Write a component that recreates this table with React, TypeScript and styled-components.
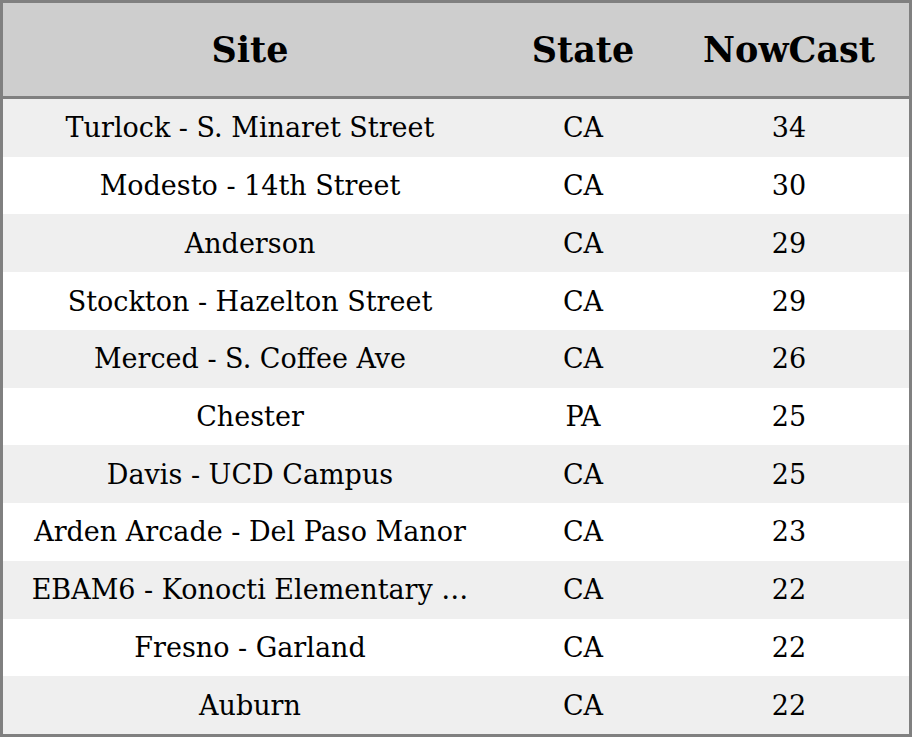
import React from "react";
import styled, { createGlobalStyle } from "styled-components";

const Global = createGlobalStyle`
  html, body { margin: 0; padding: 0; background: #ffffff; }
  body { font-family: "DejaVu Serif", serif; }
`;

const Table = styled.div`
  box-sizing: border-box;
  width: 912px;
  height: 737px;
  border: 3px solid #808080;
  display: grid;
  grid-template-columns: 494px 172px 1fr;
  grid-template-rows: 96px repeat(11, 1fr);
  font-family: "DejaVu Serif", serif;
  color: #000;
`;

const HeadCell = styled.div`
  background: #cecece;
  border-bottom: 3px solid #808080;
  display: flex;
  align-items: center;
  justify-content: center;
  font-weight: bold;
  font-size: 35px;
`;

const Cell = styled.div<{ $alt: boolean }>`
  background: ${(p) => (p.$alt ? "#efefef" : "#ffffff")};
  display: flex;
  align-items: center;
  justify-content: center;
  font-size: 27px;
  white-space: nowrap;
  overflow: hidden;
`;

const rows: [string, string, string][] = [
  ["Turlock - S. Minaret Street", "CA", "34"],
  ["Modesto - 14th Street", "CA", "30"],
  ["Anderson", "CA", "29"],
  ["Stockton - Hazelton Street", "CA", "29"],
  ["Merced - S. Coffee Ave", "CA", "26"],
  ["Chester", "PA", "25"],
  ["Davis - UCD Campus", "CA", "25"],
  ["Arden Arcade - Del Paso Manor", "CA", "23"],
  ["EBAM6 - Konocti Elementary \u2026", "CA", "22"],
  ["Fresno - Garland", "CA", "22"],
  ["Auburn", "CA", "22"],
];

export default function App() {
  return (
    <>
      <Global />
      <Table>
        <HeadCell>Site</HeadCell>
        <HeadCell>State</HeadCell>
        <HeadCell>NowCast</HeadCell>
        {rows.map((r, i) => (
          <React.Fragment key={i}>
            <Cell $alt={i % 2 === 0}>{r[0]}</Cell>
            <Cell $alt={i % 2 === 0}>{r[1]}</Cell>
            <Cell $alt={i % 2 === 0}>{r[2]}</Cell>
          </React.Fragment>
        ))}
      </Table>
    </>
  );
}
